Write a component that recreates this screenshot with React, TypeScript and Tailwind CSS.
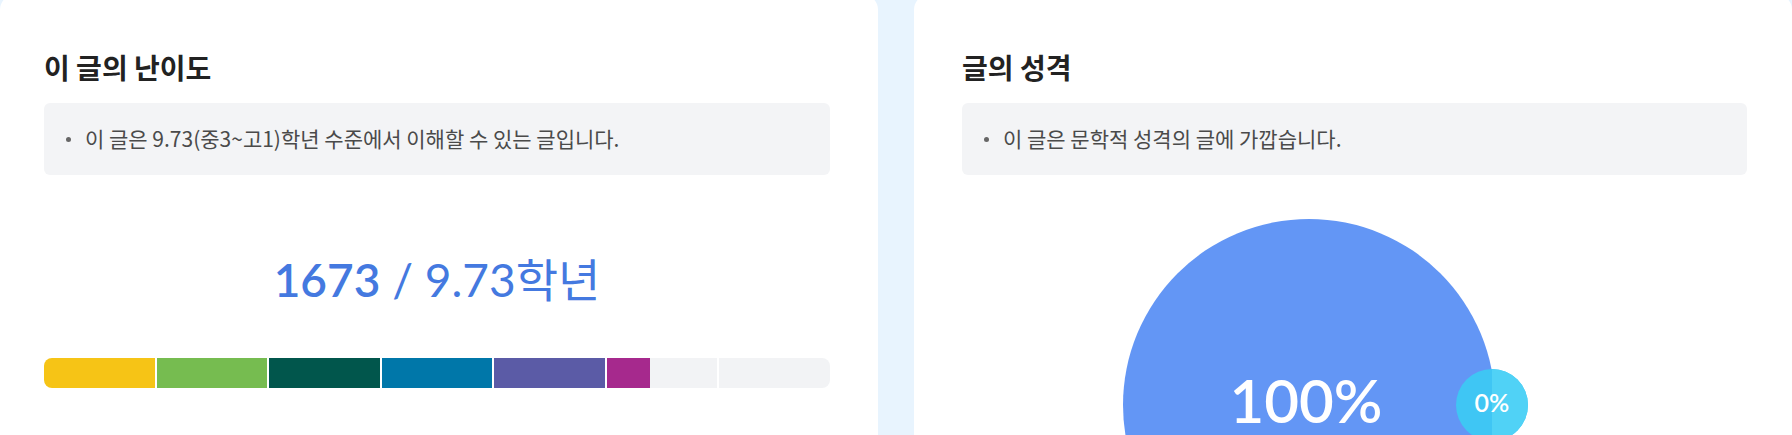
import React from "react";

const KR = '"Noto Sans CJK KR", "Noto Sans", sans-serif';
const NUM = 'Lato, "Noto Sans CJK KR", sans-serif';

const segments = [
  { color: "#f6c416", fill: 1 },
  { color: "#76bc50", fill: 1 },
  { color: "#01564c", fill: 1 },
  { color: "#0077a9", fill: 1 },
  { color: "#5b5ba6", fill: 1 },
  { color: "#a6298d", fill: 0.39 },
  { color: "#a6298d", fill: 0 },
];

function InfoBox({ text }: { text: string }) {
  return (
    <div className="mt-[17px] flex h-[72px] items-center rounded-[6px] bg-[#f3f4f6] pl-[22px]">
      <span className="mr-[14px] h-[5px] w-[5px] shrink-0 rounded-full bg-[#666]" />
      <span className="text-[21px] text-[#4a4a4a]" style={{ fontFamily: KR }}>
        {text}
      </span>
    </div>
  );
}

export default function App() {
  return (
    <div className="flex h-[435px] w-[1792px] gap-[36px] overflow-hidden bg-[#e8f4fe]" style={{ fontFamily: KR }}>
      <div className="-mt-[6px] h-[500px] w-[878px] shrink-0 rounded-[16px] bg-white pr-[48px] pl-[44px] pt-[54px]">
        <h2 className="text-[28px] leading-[38px] font-bold text-[#222]">이 글의 난이도</h2>
        <InfoBox text="이 글은 9.73(중3~고1)학년 수준에서 이해할 수 있는 글입니다." />
        <div className="mt-[75px] flex justify-center text-[46px] leading-[60px] text-[#4479e0]" style={{ fontFamily: NUM }}>
          <span className="font-semibold">1673</span>
          <span className="whitespace-pre font-normal"> / 9.73학년</span>
        </div>
        <div className="mt-[48px] flex h-[30px] gap-[2px] overflow-hidden rounded-[8px]">
          {segments.map((s, i) => (
            <div key={i} className="h-full flex-1 bg-[#f2f3f5]">
              <div className="h-full" style={{ width: `${s.fill * 100}%`, backgroundColor: s.color }} />
            </div>
          ))}
        </div>
      </div>
      <div className="-mt-[6px] h-[500px] w-[878px] shrink-0 rounded-[16px] bg-white pr-[45px] pl-[48px] pt-[54px]">
        <h2 className="text-[28px] leading-[38px] font-bold text-[#222]">글의 성격</h2>
        <InfoBox text="이 글은 문학적 성격의 글에 가깝습니다." />
        <svg width="785" height="270" viewBox="0 0 785 270" className="block">
          <defs>
            <clipPath id="rhalf">
              <rect x="530" y="0" width="60" height="270" />
            </clipPath>
          </defs>
          <circle cx="347" cy="230" r="186" fill="#6396f5" />
          <circle cx="530" cy="230" r="36" fill="#3fc6f4" />
          <circle cx="530" cy="230" r="36" fill="#50d2f6" clipPath="url(#rhalf)" />
          <text x="344" y="248" textAnchor="middle" fill="#fff" fontSize="60" fontWeight="600" style={{ fontFamily: NUM }}>
            100%
          </text>
          <text x="530" y="237" textAnchor="middle" fill="#fff" fontSize="25" fontWeight="600" style={{ fontFamily: NUM }}>
            0%
          </text>
        </svg>
      </div>
    </div>
  );
}
